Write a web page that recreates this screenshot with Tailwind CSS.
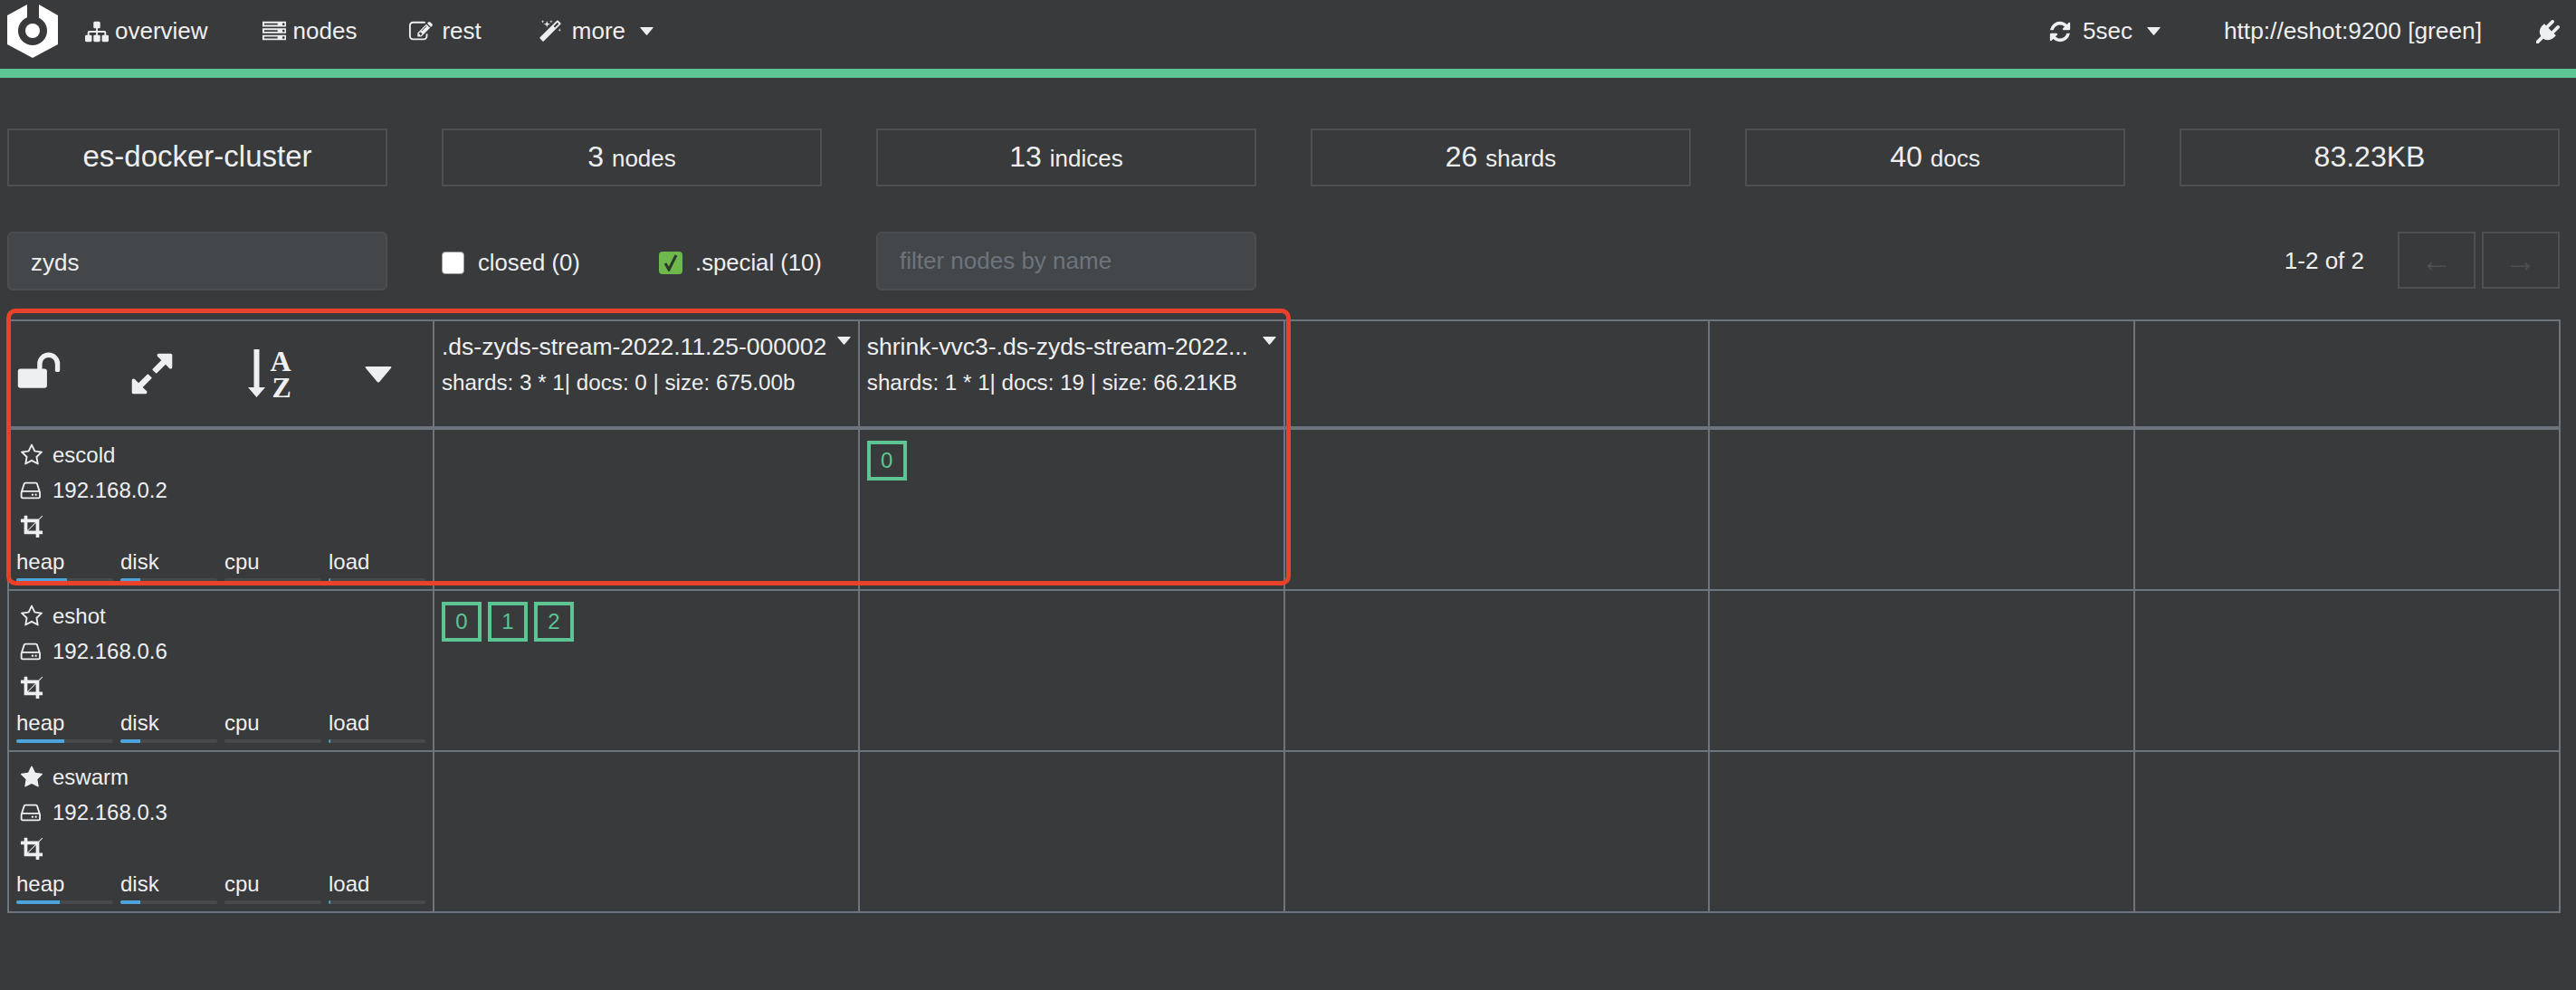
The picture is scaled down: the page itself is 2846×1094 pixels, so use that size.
<!DOCTYPE html>
<html lang="en">
<head>
    <meta charset="UTF-8">
    <title>cerebro</title>
    <script src="https://cdn.jsdelivr.net/npm/@tailwindcss/browser@4"></script>
</head>
<body class="bg-[#393a3c] text-[#eeeff0] font-['Liberation_Sans',sans-serif] text-[26px] relative h-[1094px] w-[2846px] overflow-hidden">

    <svg class="hidden">
        <symbol id="i-sitemap" viewBox="0 0 1792 1792"><path d="M1792 1248v320q0 40-28 68t-68 28h-320q-40 0-68-28t-28-68v-320q0-40 28-68t68-28h96v-192h-512v192h96q40 0 68 28t28 68v320q0 40-28 68t-68 28h-320q-40 0-68-28t-28-68v-320q0-40 28-68t68-28h96v-192h-512v192h96q40 0 68 28t28 68v320q0 40-28 68t-68 28h-320q-40 0-68-28t-28-68v-320q0-40 28-68t68-28h96v-192q0-52 38-90t90-38h512v-192h-96q-40 0-68-28t-28-68v-320q0-40 28-68t68-28h320q40 0 68 28t28 68v320q0 40-28 68t-68 28h-96v192h512q52 0 90 38t38 90v192h96q40 0 68 28t28 68z"/></symbol>
        <symbol id="i-server" viewBox="0 0 1792 1792"><path d="M128 1408h1024v-128h-1024v128zm0-512h1024v-128h-1024v128zm1568 448q0-40-28-68t-68-28-68 28-28 68 28 68 68 28 68-28 28-68zm-1568-960h1024v-128h-1024v128zm1568 448q0-40-28-68t-68-28-68 28-28 68 28 68 68 28 68-28 28-68zm0-512q0-40-28-68t-68-28-68 28-28 68 28 68 68 28 68-28 28-68zm96 832v384h-1792v-384h1792zm0-512v384h-1792v-384h1792zm0-512v384h-1792v-384h1792z"/></symbol>
        <symbol id="i-edit" viewBox="0 0 1792 1792"><path d="M888 1184l116-116-152-152-116 116v56h96v96h56zm440-720q-16-16-33 1l-350 350q-17 17-1 33t33-1l350-350q17-17 1-33zm80 594v190q0 119-84.500 203.500t-203.500 84.500h-832q-119 0-203.500-84.500t-84.500-203.500v-832q0-119 84.500-203.500t203.500-84.500h832q63 0 117 25 15 7 18 23 3 17-9 29l-49 49q-14 14-32 8-23-6-45-6h-832q-66 0-113 47t-47 113v832q0 66 47 113t113 47h832q66 0 113-47t47-113v-126q0-13 9-22l64-64q15-15 35-7t20 29zm-96-738l288 288-672 672h-288v-288zm444 132l-92 92-288-288 92-92q28-28 68-28t68 28l152 152q28 28 28 68t-28 68z"/></symbol>
        <symbol id="i-magic" viewBox="0 0 1792 1792"><path d="M1254 581l293-293-107-107-293 293zm447-293q0 27-18 45l-1286 1286q-18 18-45 18t-45-18l-198-198q-18-18-18-45t18-45l1286-1286q18-18 45-18t45 18l198 198q18 18 18 45zm-1351-190l98 30-98 30-30 98-30-98-98-30 98-30 30-98zm350 162l196 60-196 60-60 196-60-196-196-60 196-60 60-196zm930 478l98 30-98 30-30 98-30-98-98-30 98-30 30-98zm-640-640l98 30-98 30-30 98-30-98-98-30 98-30 30-98z"/></symbol>
        <symbol id="i-refresh" viewBox="0 0 1792 1792"><path d="M1639 1056q0 5-1 7-64 268-268 434.500t-478 166.500q-146 0-282.500-55t-243.500-157l-129 129q-19 19-45 19t-45-19-19-45v-448q0-26 19-45t45-19h448q26 0 45 19t19 45-19 45l-137 137q71 66 161 102t187 36q134 0 250-65t186-179q11-17 53-117 8-23 30-23h192q13 0 22.500 9.500t9.500 22.500zm25-800v448q0 26-19 45t-45 19h-448q-26 0-45-19t-19-45 19-45l138-138q-148-137-349-137-134 0-250 65t-186 179q-11 17-53 117-8 23-30 23h-199q-13 0-22.500-9.500t-9.500-22.500v-7q65-268 270-434.500t480-166.500q146 0 284 55.500t245 156.500l130-129q19-19 45-19t45 19 19 45z"/></symbol>
        <symbol id="i-plug" viewBox="0 0 1792 1792"><path d="M1755 453q37 38 37 90.500t-37 90.500l-401 400 150 150-160 160q-163 163-389.500 186.500t-411.500-100.500l-362 362h-181v-181l362-362q-124-185-100.500-411.500t186.500-389.500l160-160 150 150 400-401q38-37 91-37t90 37 37 90.500-37 90.500l-400 401 234 234 401-400q38-37 91-37t90 37z"/></symbol>
        <symbol id="i-star-o" viewBox="0 0 1792 1792"><path d="M1201 1004l306-297-422-62-189-382-189 382-422 62 306 297-73 421 378-199 377 199zm527-357q0 22-26 48l-363 354 86 500q1 7 1 20 0 50-41 50-19 0-40-12l-449-236-449 236q-22 12-40 12-21 0-31.500-14.500t-10.500-35.500q0-6 2-20l86-500-364-354q-25-27-25-48 0-37 56-46l502-73 225-455q19-41 49-41t49 41l225 455 502 73q56 9 56 46z"/></symbol>
        <symbol id="i-star" viewBox="0 0 1792 1792"><path d="M1728 647q0 22-26 48l-363 354 86 500q1 7 1 20 0 21-10.500 35.500t-30.500 14.500q-19 0-40-12l-449-236-449 236q-21 12-40 12-21 0-31.500-14.500t-10.500-35.500q0-6 2-20l86-500-364-354q-25-27-25-48 0-37 56-46l502-73 225-455q19-41 49-41t49 41l225 455 502 73q56 9 56 46z"/></symbol>
        <symbol id="i-hdd" viewBox="0 0 1792 1792"><path d="M1040 1216q0 33-23.500 56.500t-56.500 23.500-56.500-23.500-23.500-56.500 23.500-56.500 56.500-23.500 56.500 23.500 23.500 56.500zm256 0q0 33-23.500 56.500t-56.500 23.500-56.500-23.500-23.500-56.500 23.500-56.500 56.500-23.500 56.500 23.500 23.500 56.500zm160 160v-320q0-13-9.500-22.500t-22.500-9.500h-1216q-13 0-22.500 9.500t-9.500 22.500v320q0 13 9.500 22.500t22.500 9.500h1216q13 0 22.500-9.500t9.500-22.500zm-1230-480h1180l-157-482q-4-13-16-21.500t-26-8.500h-782q-14 0-26 8.500t-16 21.500zm1358 160v320q0 66-47 113t-113 47h-1216q-66 0-113-47t-47-113v-320q0-25 16-75l197-606q17-53 63-86t101-33h782q55 0 101 33t63 86l197 606q16 50 16 75z"/></symbol>
        <symbol id="i-crop" viewBox="0 0 1792 1792"><path d="M621 1280h595v-595zm-45-45l595-595h-595v595zm1152 77v192q0 14-9 23t-23 9h-224v224q0 14-9 23t-23 9h-192q-14 0-23-9t-9-23v-224h-864q-14 0-23-9t-9-23v-864h-224q-14 0-23-9t-9-23v-192q0-14 9-23t23-9h224v-224q0-14 9-23t23-9h192q14 0 23 9t9 23v224h851l246-247q10-9 23-9t23 9q9 10 9 23t-9 23l-247 246v851h224q14 0 23 9t9 23z"/></symbol>
        <symbol id="i-unlock" viewBox="0 0 1792 1792"><path d="M1728 576v256q0 26-19 45t-45 19h-64q-26 0-45-19t-19-45v-256q0-106-75-181t-181-75-181 75-75 181v192h96q40 0 68 28t28 68v576q0 40-28 68t-68 28h-960q-40 0-68-28t-28-68v-576q0-40 28-68t68-28h672v-192q0-185 131.500-316.500t316.500-131.500 316.500 131.500 131.500 316.500z"/></symbol>
        <symbol id="i-expand" viewBox="0 0 1792 1792"><path d="M883 1056q0 13-10 23l-332 332 144 144q19 19 19 45t-19 45-45 19h-448q-26 0-45-19t-19-45v-448q0-26 19-45t45-19 45 19l144 144 332-332q10-10 23-10t23 10l114 114q10 10 10 23zm781-864v448q0 26-19 45t-45 19-45-19l-144-144-332 332q-10 10-23 10t-23-10l-114-114q-10-10-10-23t10-23l332-332-144-144q-19-19-19-45t19-45 45-19h448q26 0 45 19t19 45z"/></symbol>
        <symbol id="i-caret" viewBox="0 0 30 18"><path d="M1.500 0h27q1.500 0 .7 1.500l-13 15.500q-1.200 1-2.400 0l-13-15.500q-.8-1.500.7-1.500z"/></symbol>
    </svg>

    <!-- top bar -->
    <nav class="flex items-center h-[76px] pl-2 pr-[18px] pb-[7px]">
        <svg class="w-14 h-[60px] shrink-0" viewBox="0 0 56 60">
            <path fill="#ffffff" d="M22 0 0 12v32l28 15 28-15V12L35 0z"/>
            <circle cx="28" cy="29" r="16" fill="#393a3c"/>
            <rect x="22" y="0" width="13" height="18" fill="#393a3c"/>
            <circle cx="28" cy="29" r="8" fill="#ffffff"/>
        </svg>
        <a class="flex items-center gap-[7px] ml-[30px]"><svg class="w-[26px] h-[26px] fill-current"><use href="#i-sitemap"/></svg>overview</a>
        <a class="flex items-center gap-2 ml-[60px]"><svg class="w-[26px] h-[26px] fill-current"><use href="#i-server"/></svg>nodes</a>
        <a class="flex items-center gap-[10px] ml-[58px]"><svg class="w-[26px] h-[26px] fill-current"><use href="#i-edit"/></svg>rest</a>
        <a class="flex items-center gap-[11px] ml-[63px]"><svg class="w-[26px] h-[26px] fill-current"><use href="#i-magic"/></svg>more<svg class="w-[15px] h-[9px] fill-current ml-[5px]"><use href="#i-caret"/></svg></a>
        <a class="flex items-center gap-[12px] ml-auto"><svg class="w-[26px] h-[26px] fill-current"><use href="#i-refresh"/></svg>5sec<svg class="w-[15px] h-[9px] fill-current ml-[4px]"><use href="#i-caret"/></svg></a>
        <span class="ml-[70px] text-[26.300px]">http://eshot:9200 [green]</span>
        <svg class="w-[26px] h-[26px] fill-current ml-[60px]"><use href="#i-plug"/></svg>
    </nav>
    <div class="h-2.5 bg-[#5dc594]"></div>

    <!-- cluster stats -->
    <section class="flex justify-between pl-2 pr-[18px] mt-14">
        <div class="w-[420px] h-16 border-2 border-[#4f5052] flex items-center justify-center text-[33px] pb-[2px]">es-docker-cluster</div>
        <div class="w-[420px] h-16 border-2 border-[#4f5052] flex items-center justify-center text-[32px] pb-[2px]"><span>3 <span class="text-[26px]">nodes</span></span></div>
        <div class="w-[420px] h-16 border-2 border-[#4f5052] flex items-center justify-center text-[32px] pb-[2px]"><span>13 <span class="text-[26px]">indices</span></span></div>
        <div class="w-[420px] h-16 border-2 border-[#4f5052] flex items-center justify-center text-[32px] pb-[2px]"><span>26 <span class="text-[26px]">shards</span></span></div>
        <div class="w-[420px] h-16 border-2 border-[#4f5052] flex items-center justify-center text-[32px] pb-[2px]"><span>40 <span class="text-[26px]">docs</span></span></div>
        <div class="w-[420px] h-16 border-2 border-[#4f5052] flex items-center justify-center text-[32px] pb-[2px]">83.23KB</div>
    </section>

    <!-- filters -->
    <section class="flex items-center pl-2 pr-[18px] mt-[50px] h-[65px]">
        <input value="zyds" class="w-[420px] h-[65px] bg-[#444749] border-2 border-[#4c4e50] rounded-md px-6 pt-1 outline-none">
        <div class="ml-[60px] w-[240px] flex items-center gap-[15px] mt-1 text-[25.700px]">
            <span class="w-[25px] h-[25px] bg-white rounded border border-[#9a9a9a]"></span>
            <span>closed (0)</span>
        </div>
        <div class="w-[240px] flex items-center gap-[14px] mt-1 text-[25.700px]">
            <span class="w-[26px] h-[25px] bg-[#6eb84e] rounded flex items-center justify-center">
                <svg class="w-4 h-5" viewBox="0 0 16 20"><path d="M2 11l4 7 8-16" fill="none" stroke="#2c3a2a" stroke-width="3"/></svg>
            </span>
            <span>.special (10)</span>
        </div>
        <input placeholder="filter nodes by name" class="w-[420px] h-[65px] bg-[#444749] border-2 border-[#4c4e50] rounded-md px-6 outline-none placeholder:text-[#6c757d]">
        <span class="ml-auto">1-2 of 2</span>
        <button class="ml-[37px] w-[86px] h-[63px] self-start border-2 border-[#4f5052] text-[#4f5052] text-[36px] flex items-center justify-center">←</button>
        <button class="ml-[7px] w-[86px] h-[63px] self-start border-2 border-[#4f5052] text-[#4f5052] text-[36px] flex items-center justify-center">→</button>
    </section>

    <!-- overview table -->
    <section class="mt-8 ml-2 w-[2821px] border-l-2 border-t-2 border-[#6c757d] grid grid-cols-[470px_repeat(5,469.800px)] grid-rows-[120px_repeat(3,178px)]">
        <div class="border-r-2 border-b-4 border-[#6c757d] flex items-center pl-2">
            <svg class="w-[50px] h-[50px] fill-current mb-1"><use href="#i-unlock"/></svg>
            <svg class="w-[52px] h-[52px] fill-current ml-[74px]"><use href="#i-expand"/></svg>
            <svg class="w-[54px] h-[70px] fill-current ml-[79px]" viewBox="0 -8 54 70">
                <path d="M7.500 0h6v42h6.500L10.500 53 1 42h6.500z"/>
                <text x="25.500" y="24" font-family="Liberation Serif" font-weight="700" font-size="32">A</text>
                <text x="27.500" y="53" font-family="Liberation Serif" font-weight="700" font-size="32">Z</text>
            </svg>
            <svg class="w-[30px] h-[18px] fill-current ml-[76px] mt-[2px]"><use href="#i-caret"/></svg>
        </div>
        <div class="border-r-2 border-b-4 border-[#6c757d] pl-[8px] pt-[11px] relative">
            <div class="text-[26.500px] leading-[34px] whitespace-nowrap">.ds-zyds-stream-2022.11.25-000002</div>
            <div class="text-[24.200px] leading-[34px] mt-[6px] whitespace-nowrap">shards: 3 * 1| docs: 0 | size: 675.00b</div>
            <svg class="absolute top-[17px] right-2 w-[15px] h-[9px] fill-current"><use href="#i-caret"/></svg>
        </div>
        <div class="border-r-2 border-b-4 border-[#6c757d] pl-[8px] pt-[11px] relative">
            <div class="text-[26.500px] leading-[34px] whitespace-nowrap">shrink-vvc3-.ds-zyds-stream-2022...</div>
            <div class="text-[24.200px] leading-[34px] mt-[6px] whitespace-nowrap">shards: 1 * 1| docs: 19 | size: 66.21KB</div>
            <svg class="absolute top-[17px] right-2 w-[15px] h-[9px] fill-current"><use href="#i-caret"/></svg>
        </div>
        <div class="border-r-2 border-b-4 border-[#6c757d]"></div>
        <div class="border-r-2 border-b-4 border-[#6c757d]"></div>
        <div class="border-r-2 border-b-4 border-[#6c757d]"></div>

        <!-- escold -->
        <div class="border-r-2 border-b-2 border-[#6c757d] pt-2 text-[24px]">
            <div class="flex items-center gap-[10px] h-[39px] pl-3"><svg class="w-[26px] h-[26px] fill-current"><use href="#i-star-o"/></svg>escold</div>
            <div class="flex items-center gap-[10px] h-[39px] pl-3"><svg class="w-[26px] h-[26px] fill-current"><use href="#i-hdd"/></svg>192.168.0.2</div>
            <div class="flex items-center h-[39px] pl-3"><svg class="w-[26px] h-[26px] fill-current"><use href="#i-crop"/></svg></div>
            <div class="grid grid-cols-4 gap-x-2 px-2 mt-1 w-[468px]">
                <div class="leading-[34px]">heap<div class="h-1 mt-px bg-[#47494b] rounded-sm overflow-hidden"><div class="h-1 bg-[#4ca6dc]" style="width:56px"></div></div></div>
                <div class="leading-[34px]">disk<div class="h-1 mt-px bg-[#47494b] rounded-sm overflow-hidden"><div class="h-1 bg-[#4ca6dc]" style="width:22px"></div></div></div>
                <div class="leading-[34px]">cpu<div class="h-1 mt-px bg-[#47494b] rounded-sm overflow-hidden"><div class="h-1 bg-[#4ca6dc]" style="width:0"></div></div></div>
                <div class="leading-[34px]">load<div class="h-1 mt-px bg-[#47494b] rounded-sm overflow-hidden"><div class="h-1 bg-[#4ca6dc]" style="width:2px"></div></div></div>
            </div>
        </div>
        <div class="border-r-2 border-b-2 border-[#6c757d]"></div>
        <div class="border-r-2 border-b-2 border-[#6c757d] pl-2 pt-3">
            <span class="inline-flex w-[44px] h-[44px] items-center justify-center border-4 border-[#5dc594] text-[#5dc594] text-[24px]">0</span>
        </div>
        <div class="border-r-2 border-b-2 border-[#6c757d]"></div>
        <div class="border-r-2 border-b-2 border-[#6c757d]"></div>
        <div class="border-r-2 border-b-2 border-[#6c757d]"></div>

        <!-- eshot -->
        <div class="border-r-2 border-b-2 border-[#6c757d] pt-2 text-[24px]">
            <div class="flex items-center gap-[10px] h-[39px] pl-3"><svg class="w-[26px] h-[26px] fill-current"><use href="#i-star-o"/></svg>eshot</div>
            <div class="flex items-center gap-[10px] h-[39px] pl-3"><svg class="w-[26px] h-[26px] fill-current"><use href="#i-hdd"/></svg>192.168.0.6</div>
            <div class="flex items-center h-[39px] pl-3"><svg class="w-[26px] h-[26px] fill-current"><use href="#i-crop"/></svg></div>
            <div class="grid grid-cols-4 gap-x-2 px-2 mt-1 w-[468px]">
                <div class="leading-[34px]">heap<div class="h-1 mt-px bg-[#47494b] rounded-sm overflow-hidden"><div class="h-1 bg-[#4ca6dc]" style="width:53px"></div></div></div>
                <div class="leading-[34px]">disk<div class="h-1 mt-px bg-[#47494b] rounded-sm overflow-hidden"><div class="h-1 bg-[#4ca6dc]" style="width:22px"></div></div></div>
                <div class="leading-[34px]">cpu<div class="h-1 mt-px bg-[#47494b] rounded-sm overflow-hidden"><div class="h-1 bg-[#4ca6dc]" style="width:0"></div></div></div>
                <div class="leading-[34px]">load<div class="h-1 mt-px bg-[#47494b] rounded-sm overflow-hidden"><div class="h-1 bg-[#4ca6dc]" style="width:2px"></div></div></div>
            </div>
        </div>
        <div class="border-r-2 border-b-2 border-[#6c757d] pl-2 pt-3 flex items-start gap-[7px]">
            <span class="inline-flex w-[44px] h-[44px] items-center justify-center border-4 border-[#5dc594] text-[#5dc594] text-[24px]">0</span>
            <span class="inline-flex w-[44px] h-[44px] items-center justify-center border-4 border-[#5dc594] text-[#5dc594] text-[24px]">1</span>
            <span class="inline-flex w-[44px] h-[44px] items-center justify-center border-4 border-[#5dc594] text-[#5dc594] text-[24px]">2</span>
        </div>
        <div class="border-r-2 border-b-2 border-[#6c757d]"></div>
        <div class="border-r-2 border-b-2 border-[#6c757d]"></div>
        <div class="border-r-2 border-b-2 border-[#6c757d]"></div>
        <div class="border-r-2 border-b-2 border-[#6c757d]"></div>

        <!-- eswarm -->
        <div class="border-r-2 border-b-2 border-[#6c757d] pt-2 text-[24px]">
            <div class="flex items-center gap-[10px] h-[39px] pl-3"><svg class="w-[26px] h-[26px] fill-current"><use href="#i-star"/></svg>eswarm</div>
            <div class="flex items-center gap-[10px] h-[39px] pl-3"><svg class="w-[26px] h-[26px] fill-current"><use href="#i-hdd"/></svg>192.168.0.3</div>
            <div class="flex items-center h-[39px] pl-3"><svg class="w-[26px] h-[26px] fill-current"><use href="#i-crop"/></svg></div>
            <div class="grid grid-cols-4 gap-x-2 px-2 mt-1 w-[468px]">
                <div class="leading-[34px]">heap<div class="h-1 mt-px bg-[#47494b] rounded-sm overflow-hidden"><div class="h-1 bg-[#4ca6dc]" style="width:48px"></div></div></div>
                <div class="leading-[34px]">disk<div class="h-1 mt-px bg-[#47494b] rounded-sm overflow-hidden"><div class="h-1 bg-[#4ca6dc]" style="width:22px"></div></div></div>
                <div class="leading-[34px]">cpu<div class="h-1 mt-px bg-[#47494b] rounded-sm overflow-hidden"><div class="h-1 bg-[#4ca6dc]" style="width:0"></div></div></div>
                <div class="leading-[34px]">load<div class="h-1 mt-px bg-[#47494b] rounded-sm overflow-hidden"><div class="h-1 bg-[#4ca6dc]" style="width:2px"></div></div></div>
            </div>
        </div>
        <div class="border-r-2 border-b-2 border-[#6c757d]"></div>
        <div class="border-r-2 border-b-2 border-[#6c757d]"></div>
        <div class="border-r-2 border-b-2 border-[#6c757d]"></div>
        <div class="border-r-2 border-b-2 border-[#6c757d]"></div>
        <div class="border-r-2 border-b-2 border-[#6c757d]"></div>
    </section>

    <!-- red highlight drawn over the first two rows -->
    <div class="absolute left-[7px] top-[341px] w-[1419px] h-[306px] border-[5px] border-[#e9412a] rounded-[10px] pointer-events-none"></div>
</body>
</html>
